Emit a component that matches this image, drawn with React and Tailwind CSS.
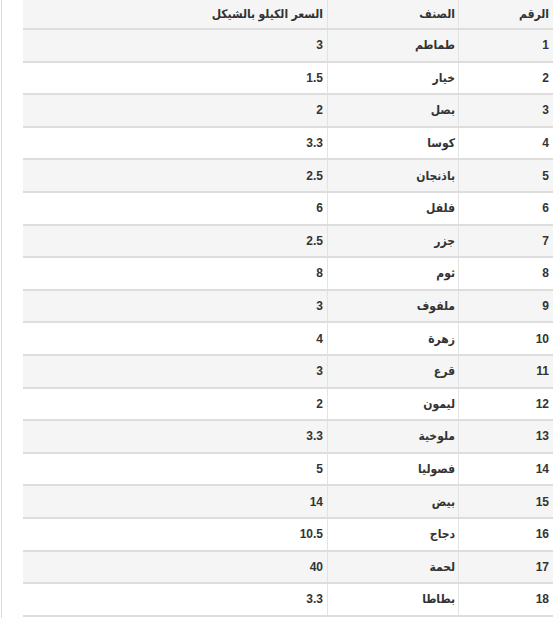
import React from "react";

const rows = [
  ["1", "طماطم", "3"],
  ["2", "خيار", "1.5"],
  ["3", "بصل", "2"],
  ["4", "كوسا", "3.3"],
  ["5", "باذنجان", "2.5"],
  ["6", "فلفل", "6"],
  ["7", "جزر", "2.5"],
  ["8", "ثوم", "8"],
  ["9", "ملفوف", "3"],
  ["10", "زهرة", "4"],
  ["11", "قرع", "3"],
  ["12", "ليمون", "2"],
  ["13", "ملوخية", "3.3"],
  ["14", "فصوليا", "5"],
  ["15", "بيض", "14"],
  ["16", "دجاج", "10.5"],
  ["17", "لحمة", "40"],
  ["18", "بطاطا", "3.3"],
];

function Row({ cells, bg, header }) {
  return (
    <div
      className={`flex border-b-2 border-[#dddddd] ${bg} ${header ? "h-[30px]" : "h-[32.6px]"}`}
    >
      <div className="w-[96px] shrink-0 flex items-center pr-[5px] border-l border-[#e3e3e3]">
        {cells[0]}
      </div>
      <div className="w-[131px] shrink-0 flex items-center pr-[3px] border-l border-[#e3e3e3]">
        {cells[1]}
      </div>
      <div className="flex-1 flex items-center pr-[4px]">{cells[2]}</div>
    </div>
  );
}

export default function App() {
  return (
    <div className="w-[553px] h-[618px] overflow-hidden bg-white">
      <div className="ml-[1px] border-l border-[#dcdcdc] h-[618px] pl-[21px]">
        <div
          dir="rtl"
          className="w-[531px] text-[12px] font-bold text-[#333333] leading-none"
          style={{ fontFamily: '"Liberation Sans", "DejaVu Sans Condensed", "DejaVu Sans", sans-serif' }}
        >
          <Row
            header
            bg="bg-[#f5f5f5]"
            cells={["الرقم", "الصنف", "السعر الكيلو بالشيكل"]}
          />
          {rows.map((r, i) => (
            <Row
              key={r[0]}
              cells={r}
              bg={i % 2 === 0 ? "bg-[#f5f5f5]" : "bg-white"}
            />
          ))}
        </div>
      </div>
    </div>
  );
}
